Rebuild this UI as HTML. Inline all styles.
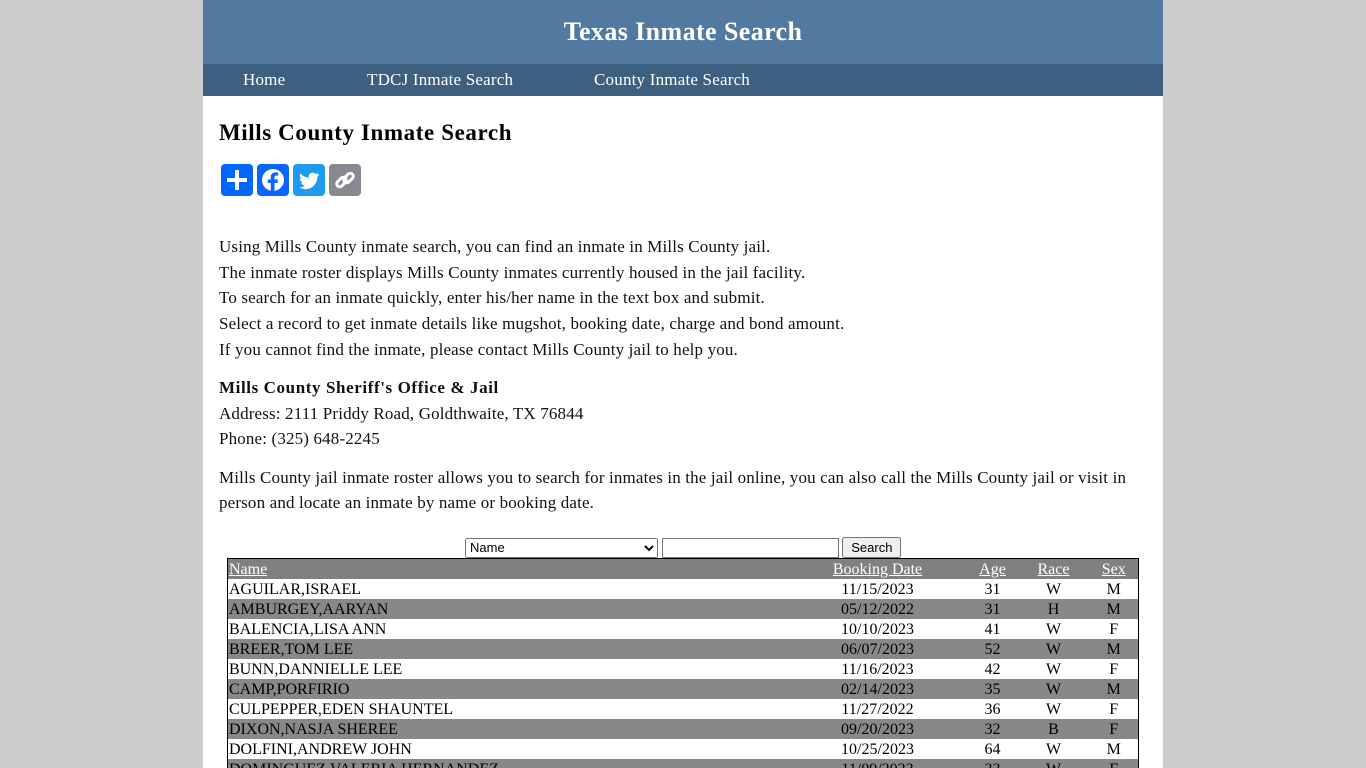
<!DOCTYPE html>
<html><head><meta charset="utf-8"><style>
body{margin:0;background:#ccc;font-family:"Liberation Serif",serif;}
.wrap{position:absolute;left:203px;top:0;width:960px;height:768px;background:#fff;overflow:hidden}
.hd{height:64px;background:#527aa0;color:#fff;text-align:center;font-weight:bold;font-size:26px;letter-spacing:0.4px;line-height:64px}
.nav{height:32px;background:#3d5f80;color:#fff;font-size:17px;letter-spacing:0.2px;line-height:32px;position:relative}
.nav span{position:absolute;top:0}
h1{position:absolute;left:16px;top:120px;margin:0;font-size:23px;letter-spacing:0.6px}
.sh{position:absolute;top:164px;width:32px;height:32px;border-radius:4px}
.txt{position:absolute;left:16px;font-size:17px;letter-spacing:0.15px;line-height:25.7px;color:#111}
p{margin:0}
.form{position:absolute;left:262px;top:537px;font-family:"Liberation Sans",sans-serif;font-size:13px}
table{position:absolute;left:24px;top:558px;border:1px solid #000;border-collapse:collapse;font-size:16px;table-layout:fixed;width:911px}
td{padding:0 1px;height:20px;line-height:19px;text-align:center;white-space:nowrap;overflow:hidden}
td:first-child{text-align:left}
tr.g{background:#888}
tr.h{background:#808080}
tr.h td{color:#fff;text-decoration:underline}
</style></head><body><div class="wrap">
<div class="hd">Texas Inmate Search</div>
<div class="nav"><span style="left:40px">Home</span><span style="left:164px">TDCJ Inmate Search</span><span style="left:391px">County Inmate Search</span></div>
<h1>Mills County Inmate Search</h1>
<svg class="sh" style="left:18px;background:#0166ff" viewBox="0 0 32 32"><path d="M16 6v20M6 16h20" stroke="#fff" stroke-width="4"/></svg>
<svg class="sh" style="left:54px;background:#0866ff" viewBox="0 0 32 32"><circle cx="16" cy="16" r="11" fill="#fff"/><path d="M17.5 28V19h3l.5-3.5h-3.5v-2.2c0-1 .3-1.7 1.8-1.7h1.9V8.5c-.3 0-1.5-.1-2.8-.1-2.8 0-4.6 1.7-4.6 4.8v2.3h-3V19h3v9z" fill="#0866ff"/></svg>
<svg class="sh" style="left:90px;background:#1d9bf0" viewBox="0 0 32 32"><path d="M26 10.5c-.7.3-1.5.5-2.3.6.8-.5 1.5-1.300 1.8-2.200-.8.5-1.7.8-2.6 1-1.6-1.7-4.4-1.8-6-.1-1 1-1.4 2.5-1.1 3.9-3.3-.2-6.3-1.7-8.4-4.3-1.1 1.9-.5 4.3 1.3 5.5-.7 0-1.3-.2-1.9-.5 0 2 1.4 3.7 3.3 4.1-.6.2-1.2.2-1.9.1.5 1.7 2.1 2.9 3.9 2.9-1.7 1.4-3.9 2-6.1 1.8 1.9 1.2 4.1 1.9 6.4 1.9 7.7 0 12-6.5 11.9-12.3.8-.6 1.5-1.3 2-2.1z" fill="#fff"/></svg>
<svg class="sh" style="left:126px;background:#888890" viewBox="0 0 32 32"><g fill="none" stroke="#fff" stroke-width="3"><rect x="7" y="15" width="11" height="6" rx="3" transform="rotate(-45 12.5 18)"/><rect x="14" y="11" width="11" height="6" rx="3" transform="rotate(-45 19.5 14)"/></g></svg>
<div class="txt" style="top:234px"><p>Using Mills County inmate search, you can find an inmate in Mills County jail.</p><p>The inmate roster displays Mills County inmates currently housed in the jail facility.</p><p>To search for an inmate quickly, enter his/her name in the text box and submit.</p><p>Select a record to get inmate details like mugshot, booking date, charge and bond amount.</p><p>If you cannot find the inmate, please contact Mills County jail to help you.</p></div>
<div class="txt" style="top:375px"><p><b style="letter-spacing:0.6px">Mills County Sheriff's Office &amp; Jail</b></p><p>Address: 2111 Priddy Road, Goldthwaite, TX 76844</p><p>Phone: (325) 648-2245</p></div>
<div class="txt" style="top:465px;width:920px;line-height:25px"><p>Mills County jail inmate roster allows you to search for inmates in the jail online, you can also call the Mills County jail or visit in person and locate an inmate by name or booking date.</p></div>
<div class="form"><select style="width:193px;height:20px;font-size:13px"><option>Name</option></select> <input style="width:173px;height:16px;padding:1px;border:1px solid #777"> <button style="font-size:13px;height:21px;padding:0 7px">Search</button></div>
<table>
<colgroup><col style="width:560px"><col style="width:180px"><col style="width:50px"><col style="width:72px"><col style="width:49px"></colgroup>
<tr class="h"><td>Name</td><td>Booking Date</td><td>Age</td><td>Race</td><td>Sex</td></tr>
<tr><td>AGUILAR,ISRAEL</td><td>11/15/2023</td><td>31</td><td>W</td><td>M</td></tr>
<tr class="g"><td>AMBURGEY,AARYAN</td><td>05/12/2022</td><td>31</td><td>H</td><td>M</td></tr>
<tr><td>BALENCIA,LISA ANN</td><td>10/10/2023</td><td>41</td><td>W</td><td>F</td></tr>
<tr class="g"><td>BREER,TOM LEE</td><td>06/07/2023</td><td>52</td><td>W</td><td>M</td></tr>
<tr><td>BUNN,DANNIELLE LEE</td><td>11/16/2023</td><td>42</td><td>W</td><td>F</td></tr>
<tr class="g"><td>CAMP,PORFIRIO</td><td>02/14/2023</td><td>35</td><td>W</td><td>M</td></tr>
<tr><td>CULPEPPER,EDEN SHAUNTEL</td><td>11/27/2022</td><td>36</td><td>W</td><td>F</td></tr>
<tr class="g"><td>DIXON,NASJA SHEREE</td><td>09/20/2023</td><td>32</td><td>B</td><td>F</td></tr>
<tr><td>DOLFINI,ANDREW JOHN</td><td>10/25/2023</td><td>64</td><td>W</td><td>M</td></tr>
<tr class="g"><td>DOMINGUEZ,VALERIA HERNANDEZ</td><td>11/09/2023</td><td>33</td><td>W</td><td>F</td></tr>
</table>
</div></body></html>
